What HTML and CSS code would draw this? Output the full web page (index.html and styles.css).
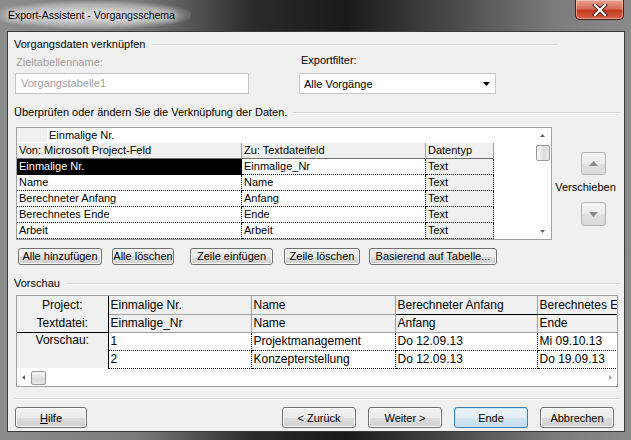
FILE: index.html
```html
<!DOCTYPE html>
<html lang="de">

<head>
    <meta charset="UTF-8">
    <title>Export-Assistent - Vorgangsschema</title>
    <link rel="stylesheet" href="styles.css">
</head>

<body>
    <div class="window">
        <div class="titlebar">
            <span class="title">Export-Assistent - Vorgangsschema</span>
            <div class="close">
                <svg width="16" height="12" viewBox="0 0 16 12">
                    <path d="M3 1 L13 11 M13 1 L3 11" stroke="#3a1a14" stroke-width="4" stroke-linecap="square" />
                    <path d="M3 1 L13 11 M13 1 L3 11" stroke="#fff" stroke-width="2.2" stroke-linecap="square" />
                </svg>
            </div>
        </div>
        <div class="client">
            <div class="group short"><span>Vorgangsdaten verknüpfen</span></div>
            <div class="fields">
                <div class="field field-name">
                    <div class="label disabled">Zieltabellenname:</div>
                    <div class="input disabled">Vorgangstabelle1</div>
                </div>
                <div class="field field-filter">
                    <div class="label">Exportfilter:</div>
                    <div class="combo">
                        <span>Alle Vorgänge</span>
                        <svg width="8" height="4" viewBox="0 0 8 4"><path d="M0 0 H7 L3.5 4 Z" fill="#000" /></svg>
                    </div>
                </div>
            </div>
            <div class="group"><span>Überprüfen oder ändern Sie die Verknüpfung der Daten.</span></div>
            <div class="mapping">
                <div class="grid">
                    <div class="grid-body">
                        <div class="edit-row">
                            <div class="edit-stub"></div>
                            <div class="edit-cell">Einmalige Nr.</div>
                        </div>
                        <div class="row head">
                            <div class="c c1">Von: Microsoft Project-Feld</div>
                            <div class="c c2">Zu: Textdateifeld</div>
                            <div class="c c3">Datentyp</div>
                        </div>
                        <div class="row">
                            <div class="c c1 selected">Einmalige Nr.</div>
                            <div class="c c2">Einmalige_Nr</div>
                            <div class="c c3">Text</div>
                        </div>
                        <div class="row">
                            <div class="c c1">Name</div>
                            <div class="c c2">Name</div>
                            <div class="c c3">Text</div>
                        </div>
                        <div class="row">
                            <div class="c c1">Berechneter Anfang</div>
                            <div class="c c2">Anfang</div>
                            <div class="c c3">Text</div>
                        </div>
                        <div class="row">
                            <div class="c c1">Berechnetes Ende</div>
                            <div class="c c2">Ende</div>
                            <div class="c c3">Text</div>
                        </div>
                        <div class="row">
                            <div class="c c1">Arbeit</div>
                            <div class="c c2">Arbeit</div>
                            <div class="c c3">Text</div>
                        </div>
                    </div>
                    <div class="vscroll">
                        <svg class="sarrow" width="16" height="14" viewBox="0 0 16 14"><path d="M5 9 H10 L7.5 6 Z" fill="#606060" /></svg>
                        <div class="vthumb"></div>
                        <div class="vspace"></div>
                        <svg class="sarrow" width="16" height="14" viewBox="0 0 16 14"><path d="M5 5 H10 L7.5 8 Z" fill="#606060" /></svg>
                    </div>
                </div>
                <div class="move">
                    <div class="movebtn up">
                        <svg width="9" height="5" viewBox="0 0 9 5"><path d="M0 5 H9 L4.5 0 Z" fill="#8a8a8a" /></svg>
                    </div>
                    <div class="movelabel">Verschieben</div>
                    <div class="movebtn down">
                        <svg width="9" height="5" viewBox="0 0 9 5"><path d="M0 0 H9 L4.5 5 Z" fill="#8a8a8a" /></svg>
                    </div>
                </div>
            </div>
            <div class="actions">
                <button class="btn b-add">Alle hinzufügen</button>
                <button class="btn b-clear">Alle löschen</button>
                <button class="btn b-insert">Zeile einfügen</button>
                <button class="btn b-delete">Zeile löschen</button>
                <button class="btn b-table">Basierend auf Tabelle...</button>
            </div>
            <div class="group"><span>Vorschau</span></div>
            <div class="preview">
                <div class="preview-clip">
                    <table class="ptable">
                        <colgroup>
                            <col style="width: 91px">
                            <col style="width: 143px">
                            <col style="width: 144px">
                            <col style="width: 142px">
                            <col style="width: 142px">
                        </colgroup>
                        <tr class="prow-project">
                            <th>Project:</th>
                            <td>Einmalige Nr.</td>
                            <td>Name</td>
                            <td class="dark">Berechneter Anfang</td>
                            <td class="dark">Berechnetes Ende</td>
                        </tr>
                        <tr class="prow-text">
                            <th>Textdatei:</th>
                            <td>Einmalige_Nr</td>
                            <td>Name</td>
                            <td>Anfang</td>
                            <td>Ende</td>
                        </tr>
                        <tr class="prow-data">
                            <th rowspan="2" class="vlabel">Vorschau:</th>
                            <td>1</td>
                            <td>Projektmanagement</td>
                            <td>Do 12.09.13</td>
                            <td>Mi 09.10.13</td>
                        </tr>
                        <tr class="prow-data">
                            <td>2</td>
                            <td>Konzepterstellung</td>
                            <td>Do 12.09.13</td>
                            <td>Do 19.09.13</td>
                        </tr>
                    </table>
                </div>
                <div class="hscroll">
                    <svg class="harrow" width="14" height="16" viewBox="0 0 14 16"><path d="M8 5 V10 L5 7.5 Z" fill="#606060" /></svg>
                    <div class="hthumb"></div>
                    <div class="hspace"></div>
                    <svg class="harrow" width="14" height="16" viewBox="0 0 14 16"><path d="M6 5 V10 L9 7.5 Z" fill="#a0a0a0" /></svg>
                </div>
            </div>
            <div class="sep"></div>
            <div class="footer">
                <button class="btn fbtn help"><u>H</u>ilfe</button>
                <div class="footer-right">
                    <button class="btn fbtn">&lt; Zurück</button>
                    <button class="btn fbtn">Weiter &gt;</button>
                    <button class="btn fbtn default">Ende</button>
                    <button class="btn fbtn">Abbrechen</button>
                </div>
            </div>
        </div>
    </div>
</body>

</html>
```

FILE: styles.css
```css
body {
    margin: 0;
    font-family: "Liberation Sans", Arial, sans-serif;
    font-size: 11px;
    color: #000;
}

.window {
    width: 631px;
    height: 440px;
    overflow: hidden;
    background: linear-gradient(to right, #8c8c8c 0%, #7a7a7a 22%, #2a2a2a 40%, #1a1a1a 55%, #4a4a4a 72%, #7c7c7c 88%, #8a8a8a 100%);
}

.titlebar {
    height: 31px;
    display: flex;
    justify-content: space-between;
    align-items: flex-start;
}

/* soft glass glow behind the caption */
.title {
    margin: 1px 0 0 -6px;
    padding: 6px 16px 6px 14px;
    font-size: 10.5px;
    line-height: 16px;
    color: #000;
    background: radial-gradient(ellipse at center, rgba(235, 235, 235, 0.85) 0%, rgba(210, 210, 210, 0.55) 55%, rgba(180, 180, 180, 0) 75%);
    text-shadow: 0 0 6px #fff, 0 0 10px #fff;
}

.close {
    width: 47px;
    height: 19px;
    margin-right: 7px;
    border: 1px solid #4a1c14;
    border-top: none;
    border-radius: 0 0 5px 5px;
    background: linear-gradient(#e8a493 0%, #d66e57 45%, #c4391f 55%, #d0624a 100%);
    box-shadow: inset 0 0 0 1px rgba(255, 220, 210, 0.5);
    display: flex;
    align-items: center;
    justify-content: center;
}

.client {
    margin: 0 6px 0 7px;
    height: 401px;
    box-sizing: border-box;
    border: 1px solid #3a3a3a;
    background-color: #f0f0f0;
    padding: 0 3px 0 6px;
}

.group {
    display: flex;
    align-items: center;
    height: 15px;
    line-height: 15px;
    margin-top: 11px;
}

.group::after {
    content: "";
    flex: 1;
    height: 1px;
    margin-left: 6px;
    background-color: #d5d9dc;
    border-bottom: 1px solid #fff;
}

.group.short {
    margin-top: 5px;
    margin-right: 63px;
}

.fields {
    display: flex;
    margin-top: 3px;
}

.field-name {
    width: 285px;
}

.label {
    line-height: 14px;
    height: 14px;
    margin-bottom: 4px;
    padding-left: 2px;
}

.field-filter .label {
    margin-top: -2px;
    margin-bottom: 6px;
}

.disabled {
    color: #a0a0a0;
}

.input {
    width: 234px;
    height: 21px;
    margin-left: 1px;
    border: 1px solid #c4c4c4;
    background-color: #fff;
    line-height: 19px;
    padding-left: 5px;
    box-sizing: border-box;
}

.combo {
    width: 197px;
    height: 21px;
    box-sizing: border-box;
    border: 1px solid #c9c9c9;
    background-color: #fff;
    display: flex;
    align-items: center;
    justify-content: space-between;
    padding: 0 4px 0 4px;
}

.mapping {
    display: flex;
    margin-top: 7px;
}

.grid {
    margin-left: 2px;
    width: 536px;
    height: 113px;
    box-sizing: border-box;
    border: 1px solid #a0a0a0;
    background-color: #fff;
    display: flex;
}

.grid-body {
    flex: 1;
}

.edit-row {
    display: flex;
    height: 14px;
    line-height: 14px;
}

.edit-stub {
    width: 30px;
    background-color: #f0f0f0;
}

.edit-cell {
    padding-left: 2px;
    font-size: 11px;
}

.row {
    display: flex;
    height: 16px;
    line-height: 15px;
}

.c {
    box-sizing: border-box;
    padding-left: 2px;
    border-bottom: 1px dotted #000;
    border-right: 1px dotted #000;
    white-space: nowrap;
    overflow: hidden;
}

.c1 {
    width: 225px;
}

.c2 {
    width: 184px;
}

.c3 {
    width: 68px;
    background-color: #f0f0f0;
}

.head .c {
    background-color: #f0f0f0;
    border-right: 1px solid #a0a0a0;
    border-bottom: 1px solid #6e6e6e;
}

.head {
    border-top: 1px solid #fff;
}

.selected {
    background-color: #000;
    color: #fff;
}

.vscroll {
    width: 16px;
    display: flex;
    flex-direction: column;
    background-color: #fff;
}

.sarrow {
    display: block;
}

.vthumb {
    margin: 3px 1px 0 1px;
    height: 14px;
    border: 1px solid #9a9a9a;
    border-radius: 2px;
    background: linear-gradient(to right, #f4f4f4, #e4e4e4 50%, #d8d8d8 51%, #e8e8e8);
}

.vspace {
    flex: 1;
}

.move {
    width: 67px;
    display: flex;
    flex-direction: column;
    align-items: flex-start;
}

.movebtn {
    margin-left: 29px;
    width: 25px;
    height: 23px;
    box-sizing: border-box;
    border: 1px solid #adb2b5;
    border-radius: 3px;
    background: linear-gradient(#f4f4f4, #ececec 50%, #e0e0e0 51%, #dadada);
    display: flex;
    align-items: center;
    justify-content: center;
}

.movebtn.up {
    margin-top: 25px;
}

.movebtn.down {
    margin-top: 8px;
    height: 24px;
}

.movelabel {
    margin-top: 5px;
    width: 67px;
    text-align: center;
    line-height: 14px;
}

.btn {
    font-family: "Liberation Sans", Arial, sans-serif;
    font-size: 11px;
    color: #000;
    padding: 0;
    white-space: nowrap;
    border: 1px solid #707070;
    border-radius: 3px;
    background: linear-gradient(#f2f2f2 0%, #ebebeb 50%, #dddddd 51%, #cfcfcf 100%);
    box-shadow: inset 0 0 0 1px #fbfbfb;
}

.actions {
    display: flex;
    margin-top: 8px;
}

.actions .btn {
    height: 17px;
    line-height: 13px;
}

.b-add {
    margin-left: 4px;
    width: 84px;
}

.b-clear {
    margin-left: 10px;
    width: 62px;
}

.b-insert {
    margin-left: 16px;
    width: 83px;
}

.b-delete {
    margin-left: 11px;
    width: 76px;
}

.b-table {
    margin-left: 9px;
    width: 128px;
}

.preview {
    margin: 4px 0 0 2px;
    width: 602px;
    height: 92px;
    box-sizing: border-box;
    border: 1px solid #a0a0a0;
    background-color: #fff;
}

.preview-clip {
    width: 600px;
    height: 73px;
    overflow: hidden;
}

.ptable {
    table-layout: fixed;
    width: 662px;
    border-collapse: collapse;
    font-size: 12px;
}

.ptable tr {
    height: 18px;
}

.ptable th,
.ptable td {
    height: 17px;
    padding: 0 0 0 2px;
    white-space: nowrap;
    overflow: hidden;
    text-align: left;
    font-weight: normal;
    line-height: 16px;
}

.ptable th {
    background-color: #f0f0f0;
    text-align: center;
    border-right: 1px solid #000;
    padding: 0;
}

.prow-project td,
.prow-text td {
    background-color: #f0f0f0;
    border-right: 1px solid #a0a0a0;
}

.prow-project td {
    border-bottom: 1px solid #a0a0a0;
}

.prow-project td.dark {
    border-bottom: 1px solid #000;
}

.prow-text th {
    border-bottom: 1px solid #000;
}

.prow-text td {
    border-bottom: 1px solid #a0a0a0;
}

.prow-data td {
    border-right: 1px dotted #000;
    border-bottom: 1px dotted #000;
}

.ptable th.vlabel {
    vertical-align: top;
    line-height: 14px;
}

.hscroll {
    display: flex;
    height: 17px;
    align-items: center;
}

.harrow {
    display: block;
}

.hthumb {
    width: 15px;
    height: 14px;
    border: 1px solid #9a9a9a;
    border-radius: 2px;
    box-sizing: border-box;
    background: linear-gradient(#f4f4f4, #e4e4e4 50%, #d8d8d8 51%, #e8e8e8);
}

.hspace {
    flex: 1;
}

.sep {
    margin-top: 11px;
    height: 1px;
    background-color: #d5d9dc;
    border-bottom: 1px solid #fff;
}

.footer {
    display: flex;
    justify-content: space-between;
    margin-top: 7px;
}

.fbtn {
    width: 74px;
    height: 21px;
}

.fbtn.help {
    width: 72px;
    margin-left: 1px;
}

.footer-right {
    display: flex;
    gap: 12px;
    margin-right: 7px;
}

.fbtn.default {
    border-color: #3c7fb1;
    background: linear-gradient(#eef6fb 0%, #e2eef6 50%, #d2e4f0 51%, #c6dcec 100%);
    box-shadow: inset 0 0 0 1px #c8e6f8;
}
```
